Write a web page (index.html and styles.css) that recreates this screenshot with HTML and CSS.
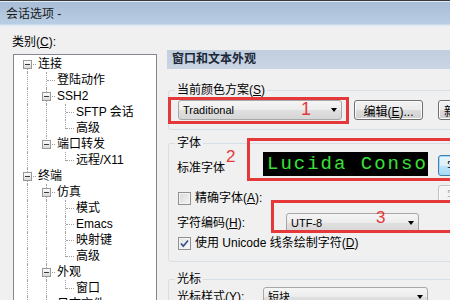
FILE: index.html
```html
<!DOCTYPE html>
<html lang="zh-CN">
<head>
    <meta charset="UTF-8">
    <title>会话选项</title>
    <link rel="stylesheet" href="styles.css">
</head>
<body>
    <div class="titlebar">会话选项 -</div>

    <div class="dialog">
        <div class="category">
            <div class="category-label">类别(<u>C</u>):</div>
            <div class="tree">
                <div class="node"><span class="cell first"><span class="box"></span></span><span class="name">连接</span></div>
                <div class="node"><span class="cell pipe"></span><span class="cell tee"></span><span class="name">登陆动作</span></div>
                <div class="node"><span class="cell pipe"></span><span class="cell tee"><span class="box"></span></span><span class="name">SSH2</span></div>
                <div class="node"><span class="cell pipe"></span><span class="cell pipe"></span><span class="cell tee"></span><span class="name">SFTP 会话</span></div>
                <div class="node"><span class="cell pipe"></span><span class="cell pipe"></span><span class="cell elbow"></span><span class="name">高级</span></div>
                <div class="node"><span class="cell pipe"></span><span class="cell elbow"><span class="box"></span></span><span class="name">端口转发</span></div>
                <div class="node"><span class="cell pipe"></span><span class="cell"></span><span class="cell elbow"></span><span class="name">远程/X11</span></div>
                <div class="node"><span class="cell tee"><span class="box"></span></span><span class="name">终端</span></div>
                <div class="node"><span class="cell pipe"></span><span class="cell tee"><span class="box"></span></span><span class="name">仿真</span></div>
                <div class="node"><span class="cell pipe"></span><span class="cell pipe"></span><span class="cell tee"></span><span class="name">模式</span></div>
                <div class="node"><span class="cell pipe"></span><span class="cell pipe"></span><span class="cell tee"></span><span class="name">Emacs</span></div>
                <div class="node"><span class="cell pipe"></span><span class="cell pipe"></span><span class="cell tee"></span><span class="name">映射键</span></div>
                <div class="node"><span class="cell pipe"></span><span class="cell pipe"></span><span class="cell elbow"></span><span class="name">高级</span></div>
                <div class="node"><span class="cell pipe"></span><span class="cell tee"><span class="box"></span></span><span class="name">外观</span></div>
                <div class="node"><span class="cell pipe"></span><span class="cell pipe"></span><span class="cell elbow"></span><span class="name">窗口</span></div>
                <div class="node"><span class="cell pipe"></span><span class="cell tee"></span><span class="name">日志文件</span></div>
            </div>
        </div>

        <div class="pane">
            <div class="pane-title">窗口和文本外观</div>

            <fieldset class="group scheme">
                <legend>当前颜色方案(<u>S</u>)</legend>
                <div class="scheme-row">
                    <div class="combo scheme-combo">Traditional<span class="arrow"></span></div>
                    <button class="btn edit-btn">编辑(<u>E</u>)...</button>
                    <button class="btn new-btn">新建(<u>N</u>)...</button>
                </div>
            </fieldset>

            <fieldset class="group font">
                <legend>字体</legend>
                <div class="std-row">
                    <span class="std-label">标准字体</span>
                    <div class="preview">Lucida Console</div>
                    <button class="btn font-btn">字体(<u>F</u>)...</button>
                </div>
                <div class="exact-row">
                    <label class="check-label"><span class="check"></span>精确字体(<u>A</u>):</label>
                    <button class="btn small-btn" disabled>字体</button>
                </div>
                <div class="enc-row">
                    <span class="enc-label">字符编码(<u>H</u>):</span>
                    <div class="combo enc-combo">UTF-8<span class="arrow"></span></div>
                </div>
                <div class="unicode-row">
                    <label class="check-label">
                        <span class="check on">
                            <svg width="11" height="11" viewBox="0 0 11 11"><path d="M2 5.5 L4.3 8.2 L9 2.5" fill="none" stroke="#3b5591" stroke-width="1.8"/></svg>
                        </span>使用 Unicode 线条绘制字符(<u>D</u>)
                    </label>
                </div>
            </fieldset>

            <fieldset class="group cursor">
                <legend>光标</legend>
                <div class="cursor-row">
                    <span class="cursor-label">光标样式(<u>Y</u>):</span>
                    <div class="combo cursor-combo">短块<span class="arrow"></span></div>
                </div>
            </fieldset>

            <!-- annotations drawn over the dialog -->
            <div class="mark mark-1"></div>
            <div class="num num-1">1</div>
            <div class="mark mark-2"></div>
            <div class="num num-2">2</div>
            <div class="mark mark-3"></div>
            <div class="num num-3">3</div>
        </div>
    </div>
</body>
</html>
```

FILE: styles.css
```css
* {
    box-sizing: border-box;
}

body {
    margin: 0;
    width: 450px;
    height: 300px;
    overflow: hidden;
    background-color: #f0f0f0;
    color: #000;
    font-family: "Liberation Sans", "Noto Sans CJK SC", sans-serif;
    font-size: 12px;
    line-height: 16px;
}

u {
    text-decoration: underline;
}

.titlebar {
    height: 27px;
    padding-left: 6px;
    line-height: 26px;
    color: #1a1a1a;
    border-top: 1px solid #3a3a3a;
    background: linear-gradient(#e0e8f1 0, #e0e8f1 1px, #a8bdd6 1px, #b9cde3 23px, #dde7f2 24px, #eef2f7 26px);
}

.dialog {
    display: flex;
}

/* left: category tree */
.category {
    width: 157px;
    flex: none;
    padding-left: 13px;
}

.category-label {
    margin: 7px 0 4px -1px;
}

.tree {
    width: 144px;
    height: 260px;
    padding: 1px 0 0 4px;
    background-color: #fff;
    border: 1px solid #828790;
    overflow: hidden;
}

.node {
    display: flex;
    height: 16px;
    white-space: nowrap;
}

.cell {
    position: relative;
    width: 19px;
    height: 16px;
    flex: none;
}

.cell::before,
.cell::after {
    content: "";
    position: absolute;
}

.pipe::before,
.tee::before {
    left: 9px;
    top: 0;
    height: 16px;
    border-left: 1px dotted #a0a0a0;
}

.elbow::before {
    left: 9px;
    top: 0;
    height: 9px;
    border-left: 1px dotted #a0a0a0;
}

.first::before {
    left: 9px;
    top: 8px;
    height: 8px;
    border-left: 1px dotted #a0a0a0;
}

.tee::after,
.elbow::after,
.first::after {
    left: 10px;
    top: 8px;
    width: 8px;
    border-top: 1px dotted #a0a0a0;
}

.box {
    position: absolute;
    left: 5px;
    top: 4px;
    width: 9px;
    height: 9px;
    z-index: 1;
    border: 1px solid #999;
    background: linear-gradient(#fff, #d8d8d8);
}

.box::after {
    content: "";
    position: absolute;
    left: 1px;
    top: 3px;
    width: 5px;
    height: 1px;
    background-color: #3a3a3a;
}

.name {
    margin-left: 1px;
}

/* right: settings pane */
.pane {
    position: relative;
    width: 360px;
    margin-left: 10px;
    flex: none;
}

.pane-title {
    margin-top: 23px;
    height: 19px;
    padding-left: 5px;
    line-height: 19px;
    font-weight: bold;
    color: #1b2838;
    background: linear-gradient(#c1cede, #cad5e3);
}

.group {
    margin: 0 0 0 1px;
    padding: 0 0 10px 9px;
    min-width: 0;
    border: 1px solid #d5dfe5;
    border-radius: 3px;
}

.group legend {
    padding: 0 2px;
    margin-left: -3px;
}

.scheme {
    margin-top: 13px;
    padding-bottom: 9px;
}

.scheme-row {
    display: flex;
    margin-top: 2px;
}

.combo {
    display: flex;
    flex: none;
    align-items: center;
    height: 20px;
    padding: 0 4px 0 4px;
    font-size: 11px;
    border: 1px solid #a7a7a7;
    border-radius: 3px;
    background: linear-gradient(#f5f5f5, #ececec 50%, #e0e0e0 50%, #d6d6d6);
    white-space: nowrap;
}

.arrow {
    margin-left: auto;
    width: 0;
    height: 0;
    border-left: 3.5px solid transparent;
    border-right: 3.5px solid transparent;
    border-top: 4px solid #000;
}

.scheme-combo {
    width: 164px;
}

.btn {
    flex: none;
    height: 20px;
    padding: 0;
    font-family: inherit;
    font-size: 12px;
    color: #000;
    border: 1px solid #707070;
    border-radius: 3px;
    background: linear-gradient(#f2f2f2, #ebebeb 50%, #dddddd 50%, #cfcfcf);
    box-shadow: inset 0 0 0 1px #fbfbfb;
    white-space: nowrap;
    overflow: hidden;
}

.edit-btn {
    width: 69px;
    margin-left: 12px;
}

.new-btn {
    width: 70px;
    margin-left: 15px;
    padding-left: 5px;
    text-align: left;
}

.font {
    margin-top: 5px;
}

.std-row {
    display: flex;
    align-items: flex-start;
    height: 25px;
    margin-top: 1px;
}

.std-label {
    flex: none;
    width: 86px;
    margin: 8px 0 0 -1px;
}

.preview {
    flex: none;
    width: 165px;
    height: 24px;
    padding-left: 4px;
    line-height: 24px;
    font-family: "Liberation Mono", monospace;
    font-size: 19px;
    letter-spacing: 2px;
    color: #38e038;
    background-color: #000;
    white-space: nowrap;
    overflow: hidden;
}

.font-btn {
    width: 60px;
    height: 21px;
    margin: 3px 0 0 10px;
    padding-left: 8px;
    text-align: left;
    border-color: #3c7fb1;
    box-shadow: inset 0 0 0 1px #a6d8f5;
    background: linear-gradient(#eaf6fd, #d9f0fc 50%, #bee6fd 50%, #a7d9f5);
}

.exact-row {
    display: flex;
    align-items: flex-start;
    height: 22px;
    margin-top: 7px;
}

.check-label {
    display: flex;
    flex: none;
    align-items: center;
    height: 16px;
    margin-top: 6px;
}

.exact-row .check-label {
    width: 260px;
}

.check {
    display: flex;
    flex: none;
    align-items: center;
    justify-content: center;
    width: 13px;
    height: 13px;
    margin-right: 4px;
    border: 1px solid #8e8f8f;
    background: linear-gradient(135deg, #d6d6d6, #f7f7f7);
    box-shadow: inset 0 0 0 1px #f4f4f4;
}

.check.on {
    background: linear-gradient(135deg, #e3e3e3, #fbfbfb);
}

.small-btn {
    width: 50px;
    height: 18px;
    margin-top: 1px;
    padding-left: 8px;
    text-align: left;
    color: #a0a0a0;
    border-color: #c0c0c0;
    background: #f4f4f4;
}

.enc-row {
    display: flex;
    align-items: center;
    margin-top: 7px;
}

.enc-label {
    flex: none;
    width: 109px;
    margin-left: -1px;
}

.enc-combo {
    width: 133px;
}

.unicode-row {
    margin-top: 2px;
}

.unicode-row .check-label {
    margin-top: 0;
}

.cursor {
    margin-top: 9px;
}

.cursor-row {
    display: flex;
    align-items: center;
}

.cursor-label {
    flex: none;
    width: 86px;
    margin-left: -1px;
}

.cursor-combo {
    width: 165px;
}

/* red annotation boxes and numbers */
.mark {
    position: absolute;
    border: 3px solid #e5383b;
}

.mark-1 {
    left: 1px;
    top: 70px;
    width: 181px;
    height: 27px;
}

.mark-2 {
    left: 80px;
    top: 111px;
    width: 230px;
    height: 43px;
}

.mark-3 {
    left: 104px;
    top: 173px;
    width: 210px;
    height: 33px;
}

.num {
    position: absolute;
    font-size: 18px;
    line-height: 18px;
    color: #e5383b;
}

.num-1 {
    left: 134px;
    top: 73px;
}

.num-2 {
    left: 59px;
    top: 121px;
    font-size: 17px;
}

.num-3 {
    left: 209px;
    top: 182px;
    font-size: 17px;
}
```
